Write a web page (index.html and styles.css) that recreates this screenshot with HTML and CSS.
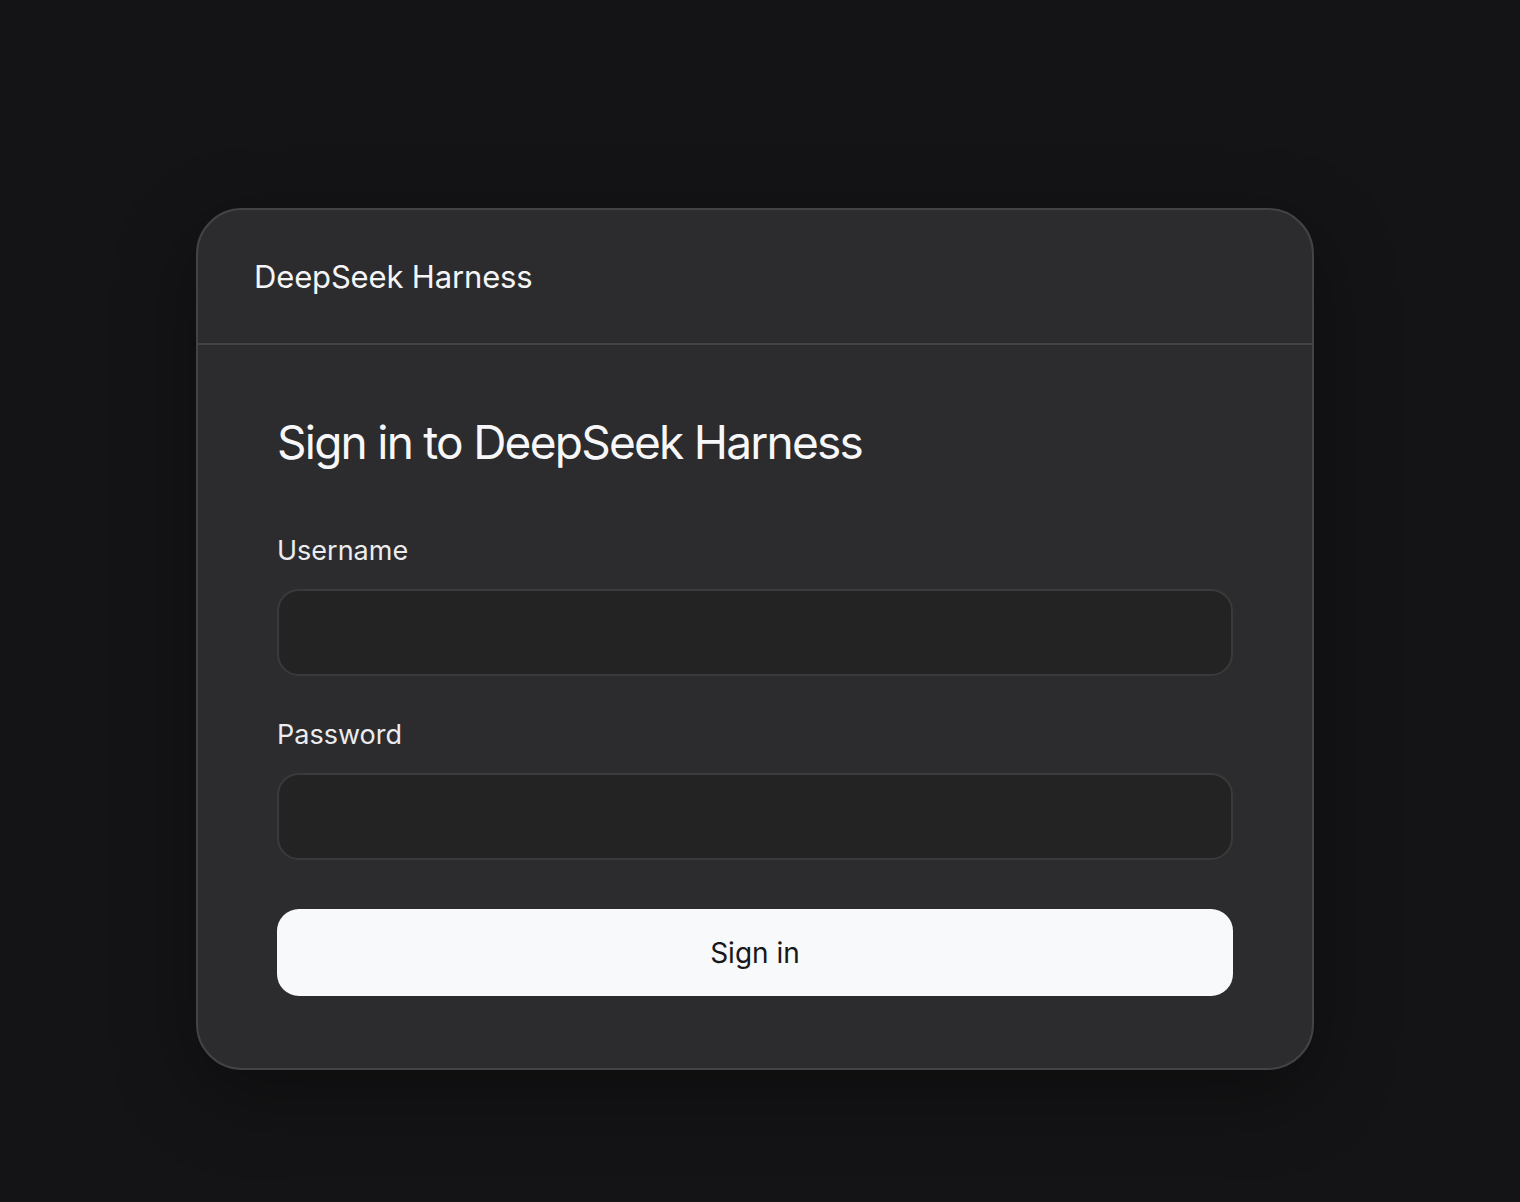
FILE: index.html
```html
<!DOCTYPE html>
<html lang="en">
<head>
<meta charset="utf-8">
<title>Sign in - DeepSeek Harness</title>
<link rel="stylesheet" href="styles.css">
</head>
<body>
<main class="page">
  <section class="card">
    <header class="card-header">
      <span class="brand">DeepSeek Harness</span>
    </header>
    <form class="card-body" onsubmit="return false;">
      <h1 class="title">Sign in to DeepSeek Harness</h1>
      <label class="field-label" for="username">Username</label>
      <input class="field-input" id="username" type="text" autocomplete="username">
      <label class="field-label" for="password">Password</label>
      <input class="field-input field-last" id="password" type="password" autocomplete="current-password">
      <button class="submit" type="submit">Sign in</button>
    </form>
  </section>
</main>
</body>
</html>
```
FILE: styles.css
```css
* { box-sizing: border-box; }
html, body {
  margin: 0;
  padding: 0;
  background: #141416;
  height: 100%;
}
body {
  font-family: Inter, "Noto Sans", "Liberation Sans", sans-serif;
  color: #f5f5f7;
}
.page {
  display: flex;
  flex-direction: column;
  align-items: center;
  padding: 208px 10px 0 0;
  min-height: 1202px;
}
.card {
  width: 1118px;
  background: #2c2c2e;
  border: 2px solid #434345;
  border-radius: 46px;
  box-shadow: 0 24px 80px rgba(0, 0, 0, 0.35);
  overflow: hidden;
}
.card-header {
  height: 135px;
  display: flex;
  align-items: center;
  padding: 0 56px;
  border-bottom: 2px solid #434345;
}
.brand {
  font-size: 31px;
  font-weight: 400;
  letter-spacing: -0.005em;
  color: #f5f5f7;
}
.card-body {
  display: flex;
  flex-direction: column;
  padding: 68px 79px 72px;
}
.title {
  margin: 0 0 62px;
  font-size: 46px;
  line-height: 58px;
  font-weight: 400;
  letter-spacing: -0.038em;
  color: #f7f7f9;
}
.field-label {
  font-size: 27px;
  line-height: 36px;
  letter-spacing: 0;
  color: #ececee;
  margin-bottom: 20px;
}
.field-input {
  height: 87px;
  background: #232323;
  border: 2px solid #3a3a3c;
  border-radius: 22px;
  color: #f5f5f7;
  font: inherit;
  font-size: 26px;
  padding: 0 24px;
  margin: 0 0 41px;
  outline: none;
}
.field-last { margin-bottom: 49px; }
.submit {
  height: 87px;
  border: none;
  border-radius: 22px;
  background: #f8f9fb;
  color: #18181a;
  font: inherit;
  font-size: 28px;
  cursor: pointer;
}
```
